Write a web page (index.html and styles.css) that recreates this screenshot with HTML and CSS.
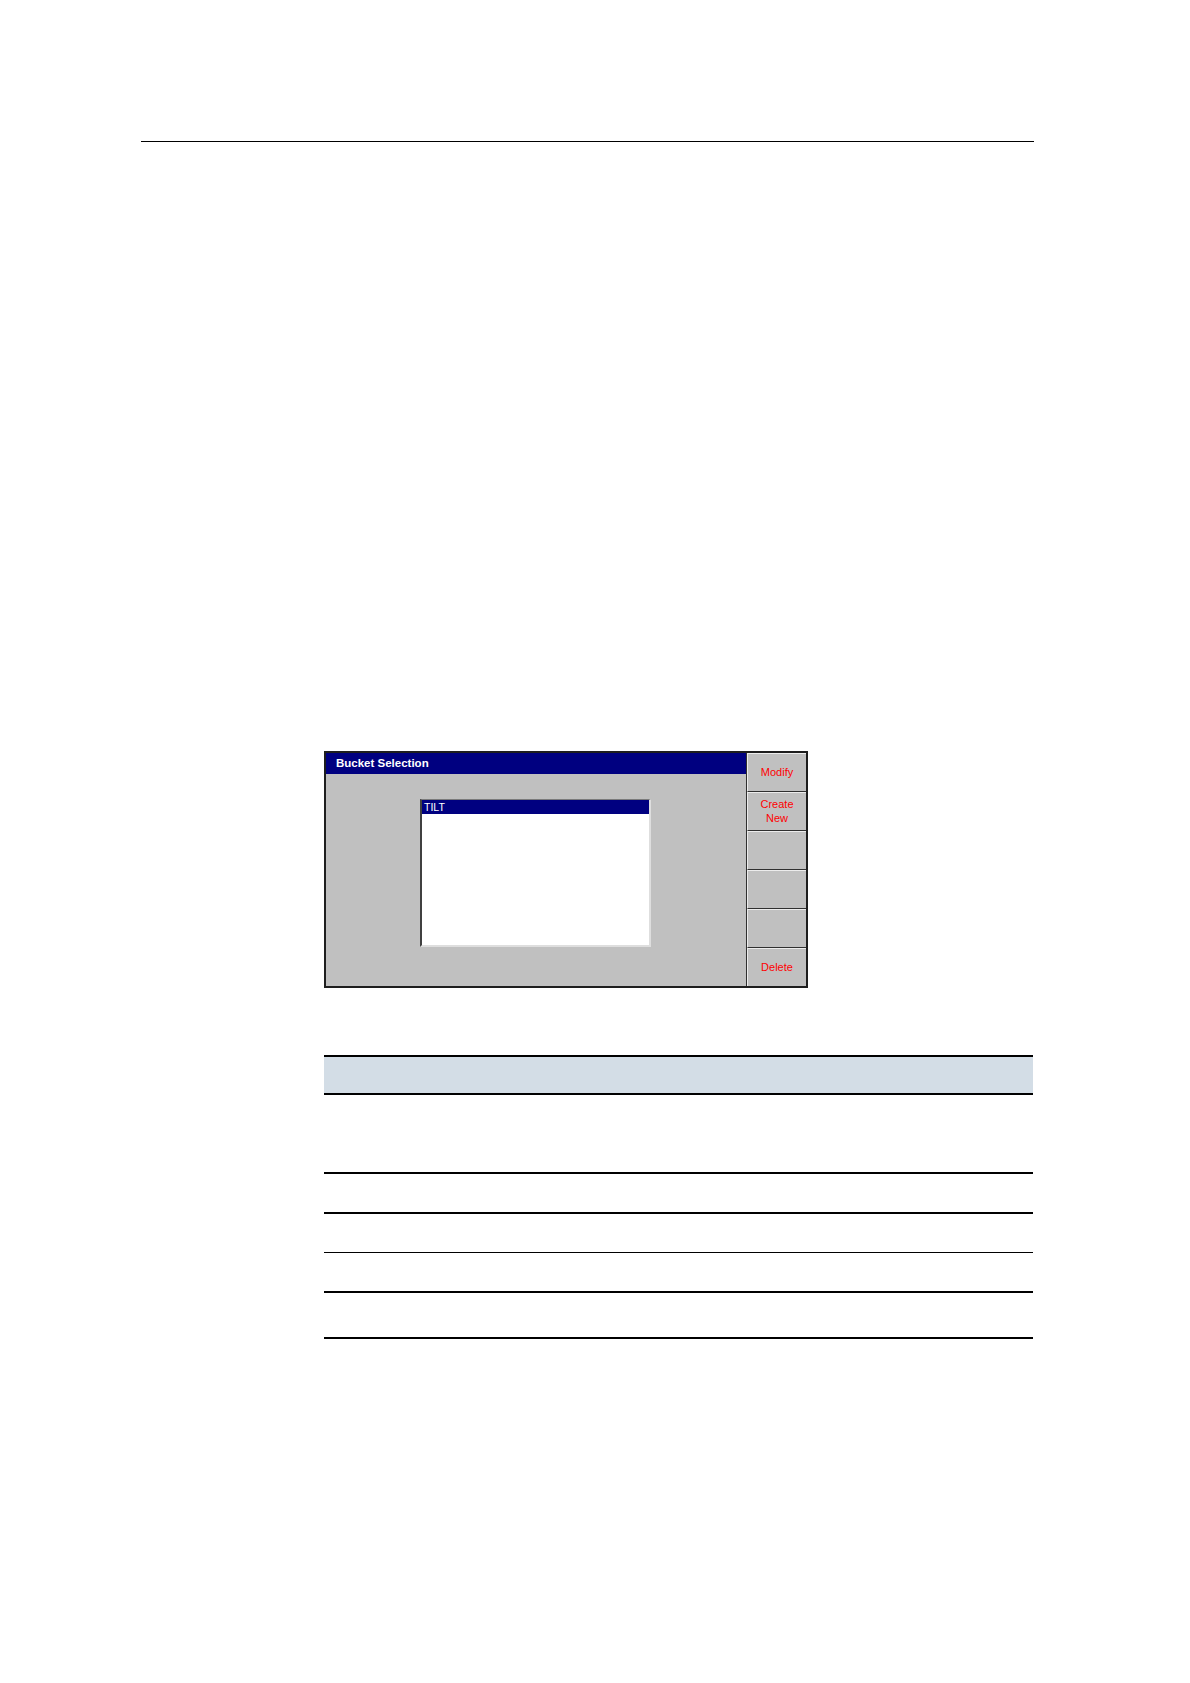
FILE: index.html
```html
<!DOCTYPE html>
<html lang="en">
<head>
<meta charset="utf-8">
<title>Bucket Selection</title>
<link rel="stylesheet" href="styles.css">
</head>
<body>
<div class="page">
  <div class="top-rule"></div>

  <div class="dialog">
    <div class="dialog-main">
      <div class="titlebar">Bucket Selection</div>
      <div class="listbox">
        <div class="list-item selected">TILT</div>
      </div>
    </div>
    <div class="softkeys">
      <div class="softkey">Modify</div>
      <div class="softkey">Create<br>New</div>
      <div class="softkey"></div>
      <div class="softkey"></div>
      <div class="softkey"></div>
      <div class="softkey">Delete</div>
    </div>
  </div>

  <div class="spec-table">
    <div class="spec-head"></div>
    <div class="spec-row row-tall"></div>
    <div class="spec-row"></div>
    <div class="spec-row thin"></div>
    <div class="spec-row"></div>
    <div class="spec-row row-last"></div>
  </div>
</div>
</body>
</html>
```

FILE: styles.css
```css
html, body {
  margin: 0;
  padding: 0;
  background: #ffffff;
}

body {
  font-family: "Liberation Sans", Arial, sans-serif;
}

.page {
  width: 1190px;
  min-height: 1683px;
  padding-top: 141px;
  box-sizing: border-box;
}

.top-rule {
  margin-left: 141px;
  width: 893px;
  height: 1px;
  background: #000000;
}

/* ---------- dialog ---------- */
.dialog {
  margin-top: 609px;
  margin-left: 324px;
  width: 484px;
  height: 237px;
  box-sizing: border-box;
  border: 2px solid #1e1e1e;
  background: #c0c0c0;
  display: flex;
}

.dialog-main {
  width: 420px;
  display: flex;
  flex-direction: column;
}

.titlebar {
  height: 21px;
  background: #000080;
  color: #ffffff;
  font-weight: bold;
  font-size: 11.5px;
  line-height: 21px;
  padding-left: 10px;
}

.listbox {
  margin: 25px 0 0 94px;
  width: 231px;
  height: 148px;
  box-sizing: border-box;
  background: #ffffff;
  border-style: solid;
  border-width: 1px 2px 2px 2px;
  border-color: #7a7a7a #dedede #dedede #404040;
}

.list-item {
  height: 14px;
  line-height: 14px;
  font-size: 10.5px;
  padding-left: 2px;
}

.list-item.selected {
  background: #000080;
  color: #ffffff;
}

.softkeys {
  flex: 1;
  display: flex;
  flex-direction: column;
  border-left: 1px solid #303030;
}

.softkey {
  flex: 1;
  display: flex;
  align-items: center;
  justify-content: center;
  text-align: center;
  background: #c0c0c0;
  color: #ff0000;
  font-size: 11px;
  line-height: 14px;
  padding-bottom: 2px;
  border-top: 1px solid #ececec;
  border-left: 1px solid #ececec;
  border-bottom: 1px solid #303030;
}

.softkey:last-child {
  border-bottom: none;
}

/* ---------- table ---------- */
.spec-table {
  margin-top: 67px;
  margin-left: 324px;
  width: 709px;
  border-top: 2px solid #000000;
}

.spec-head {
  height: 36px;
  background: #d3dde6;
  border-bottom: 2px solid #000000;
}

.spec-row {
  height: 38px;
  border-bottom: 2px solid #000000;
}

.spec-row.row-tall {
  height: 77px;
}

.spec-row.thin {
  border-bottom-width: 1px;
}

.spec-row.row-last {
  height: 44px;
}
```
